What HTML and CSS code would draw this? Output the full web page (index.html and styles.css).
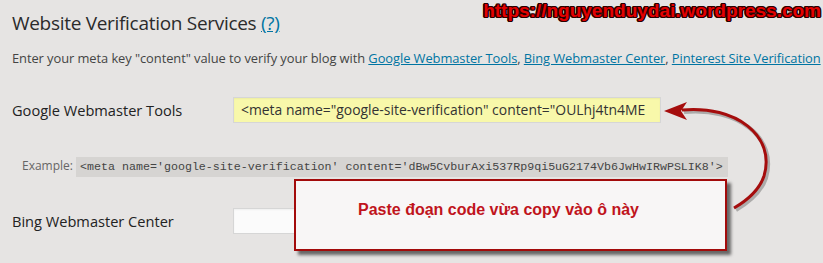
FILE: index.html
```html
<!DOCTYPE html>
<html lang="en">
<head>
  <meta charset="UTF-8">
  <title>Website Verification Services</title>
  <link rel="stylesheet" href="styles.css">
</head>
<body>
  <div class="page">
    <h2>Website Verification Services <a href="#">(?)</a></h2>
    <p class="desc">Enter your meta key "content" value to verify your blog with <a href="#">Google Webmaster Tools</a>, <a href="#">Bing Webmaster Center</a>, <a href="#">Pinterest Site Verification</a></p>

    <div class="row">
      <label>Google Webmaster Tools</label>
      <div class="field highlight">&lt;meta name="google-site-verification" content="OULhj4tn4ME</div>
    </div>
    <div class="example">Example: <code>&lt;meta name='google-site-verification' content='dBw5CvburAxi537Rp9qi5uG2174Vb6JwHwIRwPSLIK8'&gt;</code></div>
    <div class="row row-bing">
      <label>Bing Webmaster Center</label>
      <div class="field"></div>
    </div>
  </div>

  <!-- annotations drawn on top of the screenshot -->
  <div class="watermark">https://nguyenduydai.wordpress.com</div>
  <svg class="arrow" width="823" height="263" viewBox="0 0 823 263">
    <path class="arrow-shadow" d="M684 112 C738 107 778 138 766 178 C761 193 748 203 736 210" />
    <path class="arrow-line" d="M682 110 C736 105 776 136 764 176 C759 191 746 201 734 208" />
    <polygon class="arrow-head" points="664,111 687,102 681,111 687,120" />
  </svg>
  <div class="callout">Paste đoạn code vừa copy vào ô này</div>
</body>
</html>
```

FILE: styles.css
```css
body {
  margin: 0;
  background-color: #e6e4e3;
  font-family: "Open Sans", sans-serif;
  color: #333;
  width: 823px;
  height: 263px;
  overflow: hidden;
  position: relative;
}

a {
  color: #0074a2;
  text-decoration: underline;
}

.page {
  padding: 0 0 0 12px;
}

h2 {
  font-size: 19px;
  letter-spacing: -0.3px;
  font-weight: 400;
  line-height: 29px;
  margin: 9px 0 0;
  color: #2b2b2b;
}

.desc {
  font-size: 12.9px;
  letter-spacing: -0.07px;
  line-height: 18px;
  margin: 11px 0 0;
  color: #444;
  white-space: nowrap;
}

.row {
  display: grid;
  grid-template-columns: 221px 428px;
  align-items: center;
  margin-top: 30px;
}

.row label {
  font-size: 14.6px;
  line-height: 26px;
  color: #222;
}

.field {
  height: 24px;
  border: 1px solid #d6d6d6;
  background: #fbfbfb;
  font-size: 13.9px;
  line-height: 24px;
  padding-left: 7px;
  color: #333;
  white-space: nowrap;
  overflow: hidden;
  box-shadow: inset 0 1px 2px rgba(0, 0, 0, 0.05);
}

.field.highlight {
  background: #f8f8aa;
}

.example {
  margin: 33px 0 0 10px;
  font-size: 12px;
  color: #666;
  line-height: 20px;
}

.example code {
  display: inline-block;
  background: #d6d4d2;
  font-family: "Liberation Mono", monospace;
  font-size: 11.65px;
  line-height: 20px;
  padding: 0 5px 0 4px;
  color: #444;
}

.row-bing {
  margin-top: 31px;
}

.watermark {
  position: absolute;
  top: 0;
  right: 2px;
  font-family: "Liberation Sans", Arial, sans-serif;
  font-weight: bold;
  font-size: 19px;
  line-height: 22px;
  color: #e40000;
  text-shadow: 1px 0 0 #2a0000, -1px 0 0 #2a0000, 0 1px 0 #2a0000, 0 -1px 0 #2a0000,
    1px 1px 0 #2a0000, -1px -1px 0 #2a0000, 1px -1px 0 #2a0000, -1px 1px 0 #2a0000,
    1.5px 0 0 #2a0000, -1.5px 0 0 #2a0000;
}

.arrow {
  position: absolute;
  left: 0;
  top: 0;
}

.arrow-line {
  fill: none;
  stroke: #a50d0d;
  stroke-width: 3;
}

.arrow-shadow {
  fill: none;
  stroke: rgba(0, 0, 0, 0.25);
  stroke-width: 4;
}

.arrow-head {
  fill: #a50d0d;
}

.callout {
  position: absolute;
  left: 294px;
  top: 179px;
  width: 429px;
  border: 2px solid #a30b0b;
  background: #f8f6f6;
  box-shadow: 4px 4px 3px rgba(0, 0, 0, 0.55);
  font-family: "Liberation Sans", Arial, sans-serif;
  font-weight: bold;
  font-size: 16px;
  color: #c0141c;
  line-height: 18px;
  text-indent: 62px;
  padding-top: 20px;
  height: 48px;
}
```
